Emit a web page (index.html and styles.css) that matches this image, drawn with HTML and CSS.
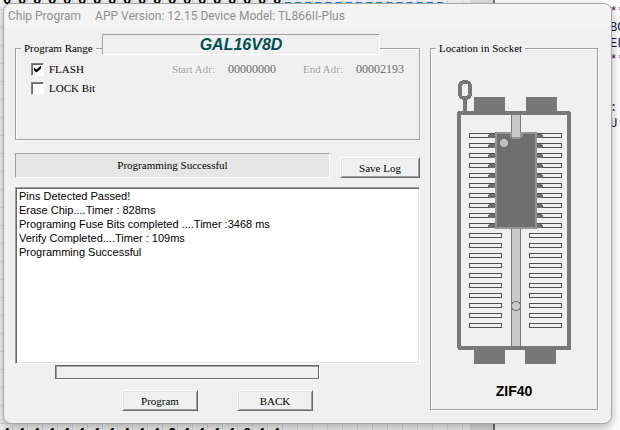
FILE: index.html
```html
<!DOCTYPE html>
<html lang="en">
<head>
<meta charset="utf-8">
<title>Chip Program</title>
<link rel="stylesheet" href="styles.css">
</head>
<body>
<div class="workspace">
  <div class="fuses">
    <div class="fuse-row">
      <div class="bits clip-top"><span>0</span><span>0</span><span>0</span><span>0</span><span>0</span><span>0</span><span>0</span><span>0</span><span>0</span><span>0</span><span>0</span><span>0</span><span>0</span><span>0</span><span>0</span><span>0</span><span>0</span><span>0</span><span>0</span></div>
      <div class="selection"></div>
    </div>
    <div class="bits clip-bottom"><span>1</span><span>1</span><span>1</span><span>1</span><span>1</span><span>1</span><span>1</span><span>1</span><span>1</span><span>1</span><span>1</span><span>0</span><span>1</span><span>1</span><span>1</span><span>1</span><span>0</span><span>1</span><span>1</span></div>
  </div>
  <div class="scroll-track"></div>
  <pre class="listing">**
BC
EL
**


:
U:</pre>
</div>

<main class="dialog">
  <header class="titlebar"><span>Chip Program</span><span>APP Version: 12.15 Device Model: TL866II-Plus</span></header>
  <div class="content">
    <div class="left">
      <div class="range">
        <fieldset class="group">
          <legend>Program Range</legend>
          <div class="options">
            <div class="checks">
              <label><input type="checkbox" checked>FLASH</label>
              <label><input type="checkbox">LOCK Bit</label>
            </div>
            <div class="addresses">
              <span class="dim">Start Adr:</span><span class="value">00000000</span>
              <span class="dim">End Adr:</span><span class="value">00002193</span>
            </div>
          </div>
        </fieldset>
        <h1 class="device">GAL16V8D</h1>
      </div>
      <div class="status-row">
        <output class="status">Programming Successful</output>
        <button type="button" class="save">Save Log</button>
      </div>
      <textarea class="log" aria-label="Log" readonly>Pins Detected Passed!
Erase Chip....Timer : 828ms
Programing Fuse Bits completed ....Timer :3468 ms
Verify Completed....Timer : 109ms
Programming Successful</textarea>
      <div class="progress" role="progressbar" aria-label="Progress"></div>
      <div class="actions">
        <button type="button">Program</button>
        <button type="button">BACK</button>
      </div>
    </div>
    <fieldset class="group socket">
      <legend>Location in Socket</legend>
      <svg class="zif" width="118" height="286" viewBox="455 79 118 286" shape-rendering="crispEdges" aria-hidden="true">
        <defs>
          <g id="slot"><rect x="469.5" y="133.5" width="32" height="4"/><rect x="529.5" y="133.5" width="32" height="4"/></g>
          <g id="slots5"><use href="#slot"/><use href="#slot" y="10"/><use href="#slot" y="20"/><use href="#slot" y="30"/><use href="#slot" y="40"/></g>
          <path id="leg" d="M489 134h6v4h-6v-1h-1v-2h1zM537 134h5v1h1v2h-1v1h-5z"/>
          <g id="legs5"><use href="#leg"/><use href="#leg" y="10"/><use href="#leg" y="20"/><use href="#leg" y="30"/><use href="#leg" y="40"/></g>
        </defs>
        <rect x="460" y="82" width="10" height="16" rx="4" fill="none" stroke="#787878" stroke-width="4"/>
        <path d="M463 100h4v11h-4zM474 97h31v14h-31zM526 97h31v14h-31zM474 350h31v14h-31zM525 350h31v14h-31z" fill="#787878"/>
        <path d="M458 111h112v1h1v238H458v-2h-1V112h1zM461 115v231h106V115z" fill="#787878" fill-rule="evenodd"/>
        <rect x="511" y="115" width="10" height="231" fill="#787878"/>
        <rect x="512" y="115" width="8" height="231" fill="#c8c8c8"/>
        <g fill="none" stroke="#505050"><use href="#slots5"/><use href="#slots5" y="50"/><use href="#slots5" y="100"/><use href="#slots5" y="150"/></g>
        <g fill="#6e6e6e"><use href="#legs5"/><use href="#legs5" y="50"/></g>
        <path d="M495 132h42v97h-42z" fill="#969696"/>
        <path d="M497 134h13v3h2v2h9v-2h2v-3h12v93h-38z" fill="#6e6e6e"/>
        <path d="M512 131h8v6h-8z" fill="#c8c8c8"/>
        <circle cx="504" cy="143" r="4" fill="#bebebe"/>
        <circle cx="516" cy="306" r="4.5" fill="#c8c8c8" stroke="#787878"/>
      </svg>
      <p class="socket-name">ZIF40</p>
    </fieldset>
  </div>
</main>
</body>
</html>
```
FILE: styles.css
```css
* { box-sizing: border-box; }

body {
  margin: 0;
  height: 100vh;
  overflow: hidden;
  position: relative;
  background: #fff;
  color: #000;
  font: 11px/14px "Liberation Serif", serif;
}

/* Fuse map editor behind the dialog */
.workspace { display: flex; height: 100vh; }

.fuses {
  flex: 1;
  display: flex;
  flex-direction: column;
  justify-content: space-between;
  background:
    repeating-linear-gradient(90deg, transparent 0 12px, #dcdcdc 12px 13px, transparent 13px 15px),
    repeating-linear-gradient(#f4f4f4 0 9px, #dcdcdc 9px 10px, #f4f4f4 10px 18px);
}

.fuse-row { display: flex; }

.bits {
  display: flex;
  flex: none;
  width: 285px;
  height: 4px;
  overflow: hidden;
  font: bold 14px/14px "Liberation Mono", monospace;
}

.bits span { flex: none; width: 15px; padding-left: 3px; }
.clip-top { align-items: flex-end; line-height: 8px; }
.clip-bottom { height: 5px; align-items: flex-start; line-height: 18px; }

.selection {
  width: 158px;
  height: 4px;
  border-bottom: 2px dashed #1480f0;
}

.scroll-track {
  width: 25px;
  border-right: 2px solid #707070;
  background: #dedede;
}

.listing {
  width: 125px;
  margin: 0;
  padding: 4px 0 0 115px;
  overflow: hidden;
  background: #fff;
  color: #101040;
  font: 12px/16px "Liberation Mono", monospace;
}

.dialog {
  position: absolute;
  inset: 3px 8px 6px 3px;
  display: flex;
  flex-direction: column;
  border: 1px solid #a8a8a8;
  border-radius: 8px;
  background: #f0f0f0;
  box-shadow: 0 4px 12px rgba(0, 0, 0, 0.3);
}

.titlebar {
  display: flex;
  gap: 14px;
  padding: 0 4px;
  border-radius: 8px 8px 0 0;
  background: #f3f3f3;
  color: #909090;
  font: 12px/24px Roboto, sans-serif;
}

.content {
  flex: 1;
  display: grid;
  grid-template-columns: minmax(0, 405fr) minmax(0, 168fr);
  gap: 10px;
  padding: 13px 13px 12px 11px;
}

.left { display: flex; flex-direction: column; }

.group {
  min-width: 0;
  margin: 0;
  padding: 0;
  border: 1px solid #a0a0a0;
  box-shadow: 1px 1px 0 #fff, inset 1px 1px 0 #fff;
}

.group legend {
  margin-left: 5px;
  padding: 0 3px;
  background: #f0f0f0;
}

.range { position: relative; }
.range .group { height: 99px; }

.device {
  position: absolute;
  top: -7px;
  left: 87px;
  right: 40px;
  margin: 0;
  border: 1px solid;
  border-color: #a0a0a0 #fff #fff #a0a0a0;
  background: #f0f0f0;
  color: #005050;
  text-align: center;
  font: italic bold 16px/19px "Liberation Sans", sans-serif;
}

.options {
  display: flex;
  justify-content: space-between;
  padding: 7px 15px 0 15px;
}

.checks { display: grid; gap: 5px; align-content: start; }
.checks label { display: flex; align-items: center; gap: 5px; }

.checks input {
  appearance: none;
  width: 13px;
  height: 13px;
  margin: 0;
  border: 1px solid;
  border-color: #808080 #fff #fff #808080;
  background: #fff;
  box-shadow: inset 1px 1px 0 #696969;
}

.checks input:checked::before {
  content: "";
  display: block;
  width: 7px;
  height: 7px;
  margin: 2px;
  background: #000;
  clip-path: polygon(0 29%, 36% 57%, 100% 0, 100% 43%, 36% 100%, 0 71%);
}

.addresses { display: flex; height: 14px; gap: 13px; }
.dim { color: #a0a0a0; text-shadow: 1px 1px 0 #fff; }
.value { color: #6d6d6d; font-size: 12px; }
.value + .dim { margin-left: 14px; }

.status-row {
  display: flex;
  align-items: flex-end;
  gap: 10px;
  margin: 13px 0 9px;
}

.status {
  flex: 1;
  border: 1px solid;
  border-color: #a0a0a0 #fff #fff #a0a0a0;
  background: #e6e6e6;
  text-align: center;
  line-height: 23px;
}

button {
  width: 76px;
  height: 21px;
  padding: 0;
  border: 1px solid;
  border-color: #fff #696969 #696969 #fff;
  background: #f0f0f0;
  box-shadow: inset 1px 1px 0 #e3e3e3, inset -1px -1px 0 #a0a0a0;
  color: #000;
  font: inherit;
}

.save { width: 80px; }

.log {
  flex: 1;
  width: 100%;
  padding: 1px 3px 0;
  resize: none;
  border: 1px solid;
  border-color: #a0a0a0 #fff #fff #a0a0a0;
  outline: none;
  background: #fff;
  box-shadow: inset 1px 1px 0 #696969, inset -1px -1px 0 #e3e3e3;
  color: #000;
  font: 11px/14px "Liberation Sans", sans-serif;
}

.progress {
  height: 14px;
  margin: 1px 101px 11px 40px;
  border: 1px solid #696969;
  box-shadow: inset 1px 1px 0 #a0a0a0, 1px 1px 0 #fff;
}

.actions {
  display: flex;
  gap: 39px;
  padding-left: 107px;
}

.socket { margin-bottom: 1px; }

.zif { display: block; margin: 24px auto 0; }

.socket-name {
  margin: 18px 0 0;
  text-align: center;
  font: bold 14px/16px "Liberation Sans", sans-serif;
}
```
